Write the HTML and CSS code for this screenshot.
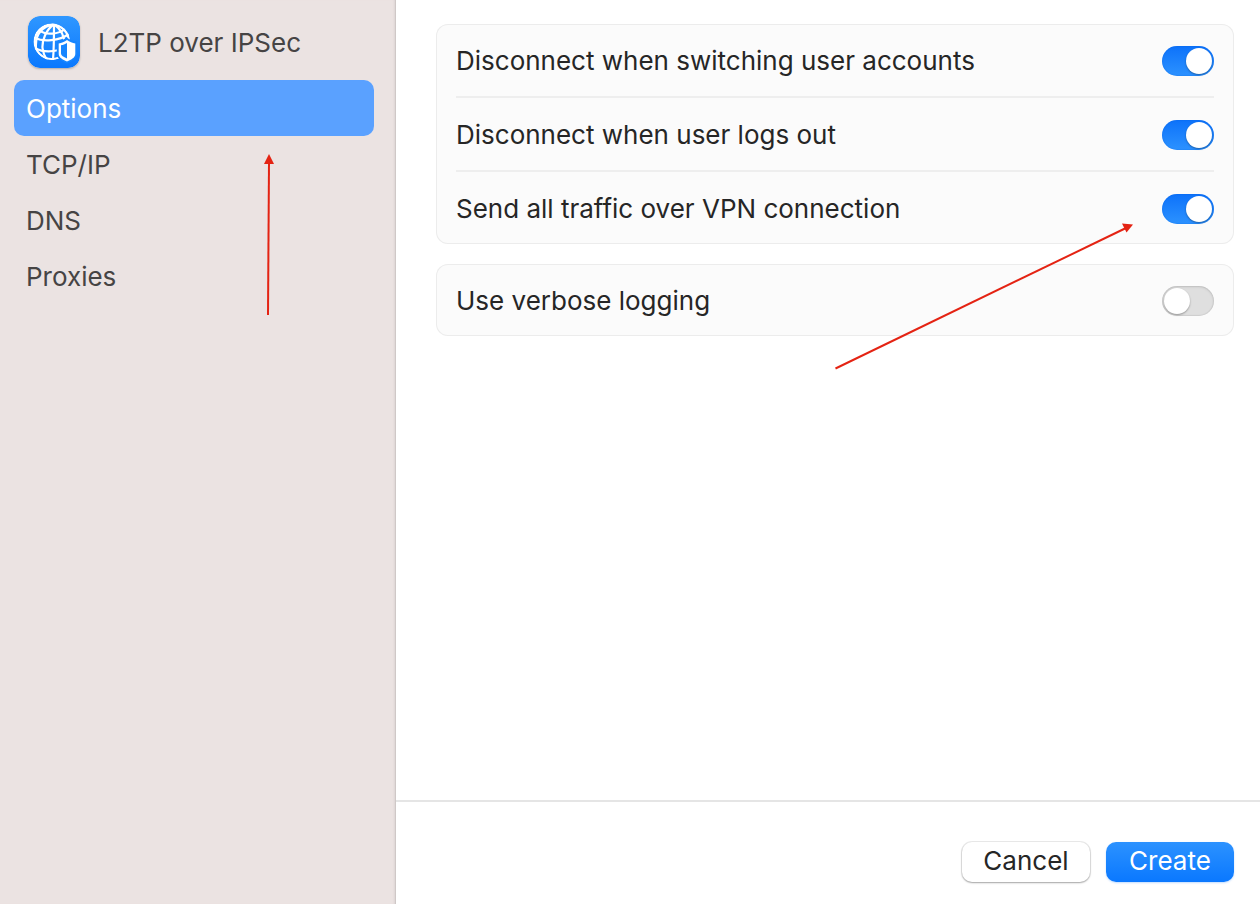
FILE: index.html
```
<!DOCTYPE html>
<html lang="en">
<head>
<meta charset="utf-8">
<meta name="viewport" content="width=device-width, initial-scale=1">
<title>L2TP over IPSec</title>
<link rel="stylesheet" href="styles.css">
</head>
<body>
<div class="window">
  <aside class="sidebar">
    <header class="service">
      <svg class="service-icon" viewBox="0 0 52 52" aria-hidden="true">
        <defs>
          <linearGradient id="tile" x1="0" y1="0" x2="0" y2="1">
            <stop offset="0" stop-color="#2f97ff"/>
            <stop offset="1" stop-color="#0a78fe"/>
          </linearGradient>
          <clipPath id="globe"><circle cx="23.800" cy="25.800" r="18.400"/></clipPath>
        </defs>
        <rect width="52" height="52" rx="12" fill="url(#tile)"/>
        <g fill="none" stroke="#fff" stroke-width="2.200" clip-path="url(#globe)">
          <circle cx="23.800" cy="25.800" r="17.200"/>
          <path d="M26 8C18 14 14 24 14.500 32C15 37 17 41 19 44M26 8C13 11 7 19 8 32M26 8C26 20 26 32 25 44M26 8C34 14 37 21 36.500 30"/>
          <path d="M11 14C18 20 31 18 37 13M7 22C15 26 31 25 41 18M7 32C14 36 23 36 31 34"/>
        </g>
        <path d="M38.500 21.500C42 24 45 25 49 25.500V38C49 42.500 44 45 39 47.500C33.500 45 28.800 42.500 28.800 38V25.500C32.500 25 35.500 24 38.500 21.500Z" fill="#1685ff"/>
        <path d="M39 24C41.500 26 44.500 27 47.300 27.500V38C47.300 41.500 43.500 43.500 39 45.500C34.500 43.500 30.700 41.500 30.700 38V27.500C33.500 27 36.500 26 39 24Z" fill="#fff"/>
        <path d="M39 27V42.500C35.500 41 33 39.500 33 37.500V29.300C35.200 28.800 37 28.200 39 27Z" fill="#1685ff"/>
      </svg>
      <h1 class="service-name">L2TP over IPSec</h1>
    </header>
    <nav class="nav" aria-label="VPN settings">
      <a class="nav-item nav-item-active" href="#options" aria-current="page">Options</a>
      <a class="nav-item" href="#tcpip">TCP/IP</a>
      <a class="nav-item" href="#dns">DNS</a>
      <a class="nav-item" href="#proxies">Proxies</a>
    </nav>
  </aside>
  <form class="panel">
    <div class="content" id="options">
      <section class="card">
        <div class="row">
          <label for="switching">Disconnect when switching user accounts</label>
          <input class="switch" type="checkbox" role="switch" id="switching" checked>
        </div>
        <div class="row">
          <label for="logout">Disconnect when user logs out</label>
          <input class="switch" type="checkbox" role="switch" id="logout" checked>
        </div>
        <div class="row">
          <label for="traffic">Send all traffic over VPN connection</label>
          <input class="switch" type="checkbox" role="switch" id="traffic" checked>
        </div>
      </section>
      <section class="card">
        <div class="row">
          <label for="verbose">Use verbose logging</label>
          <input class="switch" type="checkbox" role="switch" id="verbose">
        </div>
      </section>
    </div>
    <footer class="actions">
      <button class="button" type="button">Cancel</button>
      <button class="button button-primary" type="button">Create</button>
    </footer>
  </form>
  <svg class="annotations" viewBox="0 0 1260 904" preserveAspectRatio="xMinYMin meet" aria-hidden="true">
    <g stroke="#e42313" stroke-width="2" fill="none">
      <path d="M268 315L269 162"/>
      <path d="M835.500 368.500L1126 228"/>
    </g>
    <g fill="#e42313">
      <path d="M269 154L274 164H264Z"/>
      <path d="M1133 224.500L1126.500 232.500L1122 223.500Z"/>
    </g>
  </svg>
</div>
</body>
</html>
```
FILE: styles.css
```
* { box-sizing: border-box; }

body {
  margin: 0;
  font: 400 26px/32px Inter, "Liberation Sans", sans-serif;
  color: #262626;
  background: #fff;
}

.window {
  position: relative;
  display: flex;
  min-height: 100vh;
}

.sidebar {
  flex: 0 0 396px;
  padding: 16px 22px 16px 14px;
  background: #ebe3e2;
  box-shadow: inset -1px 0 #cfc8c7, inset -3px 0 2px -1px #ddd5d4;
  color: #464444;
}

.service {
  display: flex;
  align-items: center;
  gap: 18px;
  padding: 0 14px 12px;
}

.service-icon {
  width: 52px;
  height: 52px;
  border-radius: 12px;
  box-shadow: 0 1px 2px #00000040;
}

.service-name {
  margin: 0;
  padding-top: 2px;
  font: inherit;
}

.nav {
  display: flex;
  flex-direction: column;
}

.nav-item {
  padding: 13px 12px 11px;
  border-radius: 10px;
  color: inherit;
  text-decoration: none;
}

.nav-item-active {
  background: #5aa1ff;
  color: #fff;
}

.panel {
  flex: 1;
  display: flex;
  flex-direction: column;
  min-width: 0;
}

.content {
  flex: 1;
  display: flex;
  flex-direction: column;
  gap: 20px;
  padding: 24px 26px 24px 40px;
}

.card {
  padding: 0 20px;
  border-radius: 12px;
  background: #fbfbfb;
  box-shadow: inset 0 0 0 1px #ececec;
}

.row {
  display: flex;
  align-items: center;
  justify-content: space-between;
  gap: 16px;
  padding: 22px 0 20px;
  line-height: 30px;
}

.row + .row { border-top: 2px solid #eee; }

.switch {
  appearance: none;
  flex: none;
  display: flex;
  width: 52px;
  height: 30px;
  margin: 0;
  padding: 2px;
  border-radius: 15px;
  background: #dfdfdf;
  box-shadow: inset 0 0 1px 1px #00000010, inset 0 1px 3px #0000001a;
}

.switch::before {
  content: "";
  width: 26px;
  height: 26px;
  border-radius: 50%;
  background: #fff;
  box-shadow: 0 1px 2px #00000055;
}

.switch:checked {
  justify-content: flex-end;
  background: linear-gradient(#0d72fa, #2c92ff);
  box-shadow: inset 0 0 1px 1px #0060df30;
}

.actions {
  display: flex;
  justify-content: flex-end;
  gap: 16px;
  padding: 40px 26px 22px;
  border-top: 2px solid #e5e5e5;
}

.button {
  min-width: 128px;
  height: 40px;
  padding: 0 16px 2px;
  border: 0;
  border-radius: 10px;
  background: #fff;
  box-shadow: 0 0 0 1px #00000014, 0 1px 2px #0000004d;
  color: #262626;
  font: inherit;
}

.button-primary {
  background: linear-gradient(#2c92ff, #0a78ff);
  box-shadow: 0 1px 2px #0a78ff40;
  color: #fff;
}

.annotations {
  position: absolute;
  top: 0;
  left: 0;
  width: 1260px;
  height: 904px;
  pointer-events: none;
}
```
